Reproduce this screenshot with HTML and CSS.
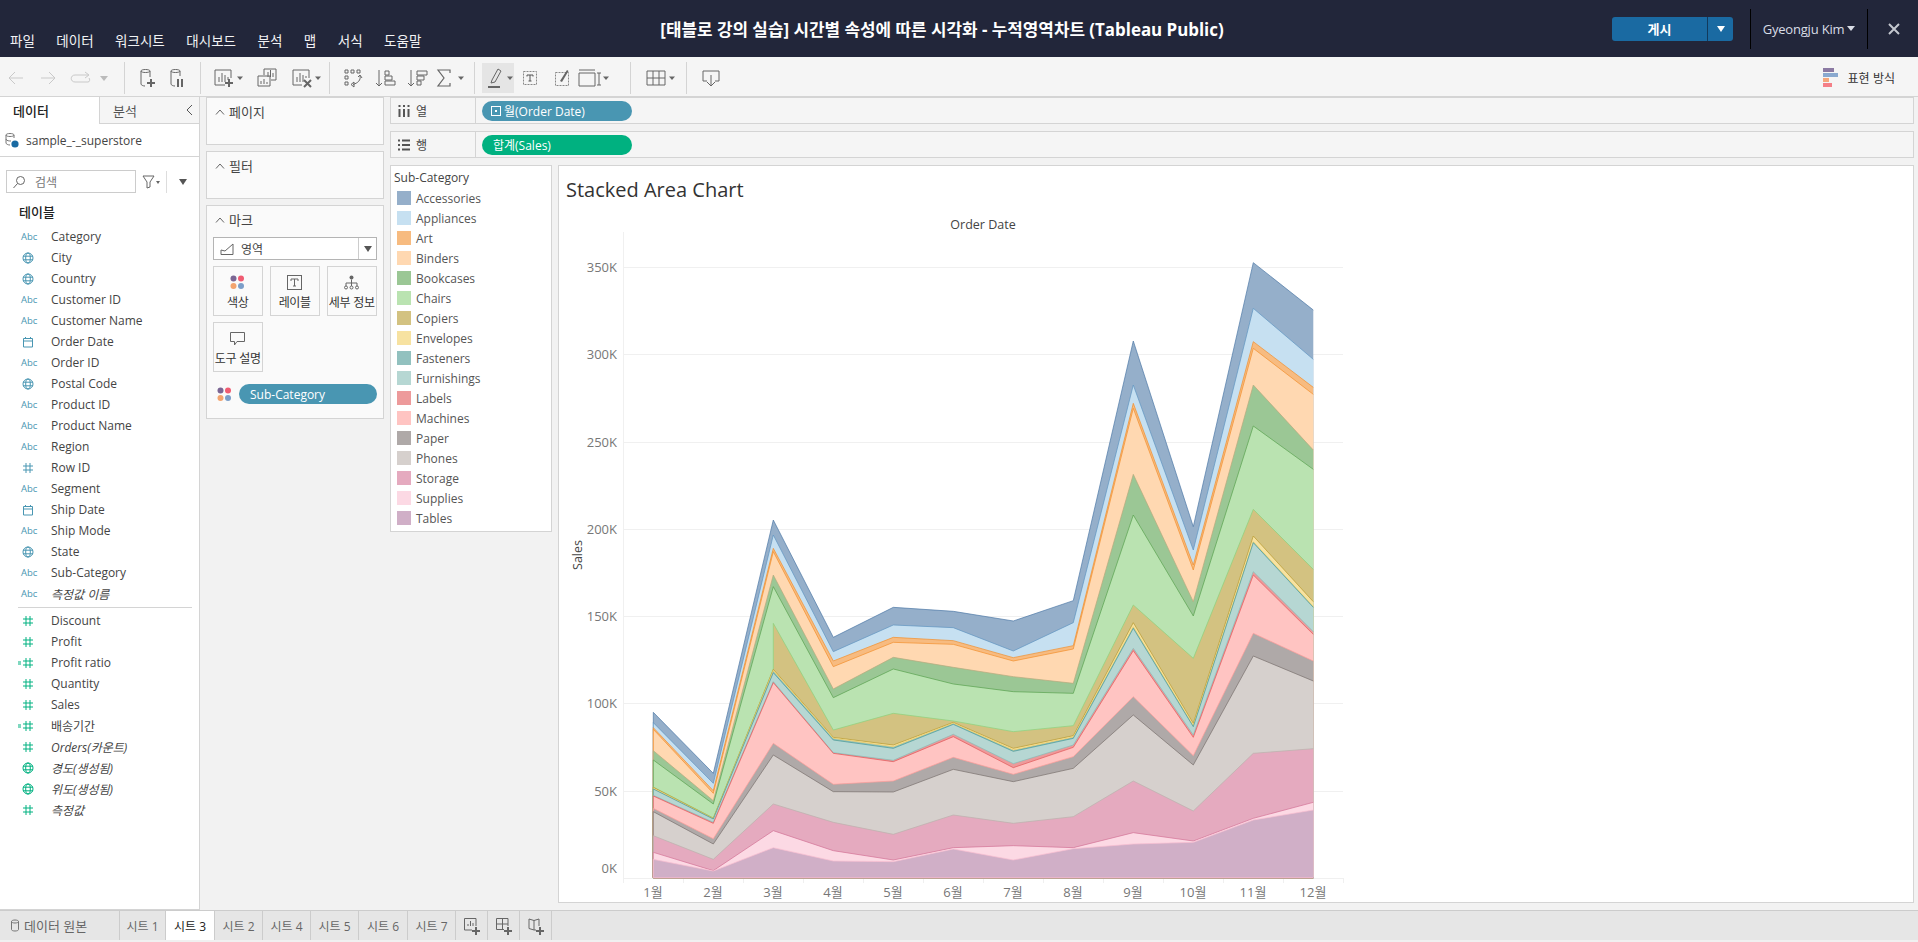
FILE: index.html
```html
<!DOCTYPE html>
<html lang="ko">
<head>
<meta charset="utf-8">
<title>Tableau Public</title>
<link rel="stylesheet" href="styles.css">
</head>
<body>
<svg class="defs" aria-hidden="true">
  <defs>
    <symbol id="i-globe" viewBox="0 0 12 12"><circle cx="6" cy="6" r="5" fill="none" stroke="currentColor"/><ellipse cx="6" cy="6" rx="2.3" ry="5" fill="none" stroke="currentColor"/><path d="M1 4.2H11M1 7.8H11" stroke="currentColor" fill="none"/></symbol>
    <symbol id="i-cal" viewBox="0 0 12 12"><path d="M1.5 2.5H10.5V11H1.5ZM1.5 5H10.5M3.5 1V3M8.5 1V3" fill="none" stroke="currentColor"/></symbol>
    <symbol id="i-hash" viewBox="0 0 12 12"><path d="M4 1V11M8 1V11M1 4H11M1 8H11" fill="none" stroke="currentColor"/></symbol>
    <symbol id="i-calc" viewBox="0 0 16 12"><path d="M8 1V11M12 1V11M5 4H15M5 8H15" fill="none" stroke="currentColor"/><path d="M0 5H3M0 7H3" fill="none" stroke="currentColor"/></symbol>
    <symbol id="i-chev" viewBox="0 0 10 6"><path d="M1 5.5L5 1L9 5.5" fill="none" stroke="#666"/></symbol>
    <symbol id="i-dots" viewBox="0 0 15 15"><circle cx="3.5" cy="3.5" r="3" fill="#7b6694"/><circle cx="11" cy="3.5" r="3" fill="#f05c72"/><circle cx="3.5" cy="11" r="3" fill="#f3a46f"/><circle cx="11" cy="11" r="3" fill="#7b9ec9"/></symbol>
    <symbol id="i-caret" viewBox="0 0 8 24"><path d="M1 10.5H7L4 14Z" fill="#666"/></symbol>
    <symbol id="i-newbars" viewBox="0 0 24 24"><path d="M13 19H3V4H19V12" fill="none" stroke="#666"/><path d="M7 16V11M10 16V7M13 16V9M16 14V11" stroke="#666" fill="none"/><path d="M17 13V21M13 17H21" stroke="#666" stroke-width="2" fill="none"/></symbol>
  </defs>
</svg>

<header class="topbar">
  <nav class="menu">
    <span>파일</span><span>데이터</span><span>워크시트</span><span>대시보드</span><span>분석</span><span>맵</span><span>서식</span><span>도움말</span>
  </nav>
  <h1 class="doc-title">[태블로 강의 실습] 시간별 속성에 따른 시각화 - 누적영역차트 (Tableau Public)</h1>
  <div class="account">
    <div class="publish"><span class="publish-main">게시</span><span class="publish-more"></span></div>
    <div class="user">Gyeongju Kim<span class="user-caret"></span></div>
    <svg class="close" width="12" height="12" viewBox="0 0 12 12"><path d="M1 1L11 11M11 1L1 11" stroke="#c4c7cf" stroke-width="2" fill="none"/></svg>
  </div>
</header>

<div class="toolbar">
  <div class="tb-group g1">
    <svg class="tb w32" viewBox="0 0 32 24"><path d="M23 12H9M15 6L9 12L15 18" fill="none" stroke="#c9c9c9"/></svg>
    <svg class="tb w32" viewBox="0 0 32 24"><path d="M9 12H23M17 6L23 12L17 18" fill="none" stroke="#c9c9c9"/></svg>
    <svg class="tb w32" viewBox="0 0 32 24"><path d="M24 9H11C6 9 6 16 11 16H24C26 16 26 13 25 12M21 6L25 9L21 12" fill="none" stroke="#c9c9c9"/></svg>
    <svg class="tb w16" viewBox="0 0 16 24"><path d="M4 10H12L8 15Z" fill="#bbb"/></svg>
  </div>
  <div class="tb-group g2">
    <svg class="tb w30" viewBox="0 0 30 24"><path d="M9 5C9 3 18 3 18 5V11M9 5V18C9 19 11 20 13 20M9 5C9 7 18 7 18 5" fill="none" stroke="#666"/><path d="M19 13V21M15 17H23" stroke="#666" stroke-width="2" fill="none"/></svg>
    <svg class="tb w30" viewBox="0 0 30 24"><path d="M9 5C9 3 18 3 18 5V10M9 5V18C9 19 11 20 13 20M9 5C9 7 18 7 18 5" fill="none" stroke="#666"/><path d="M16 13V21M20 13V21" stroke="#666" stroke-width="2" fill="none"/></svg>
  </div>
  <div class="tb-group g3">
    <div class="tb-cluster"><svg class="tb w24" viewBox="0 0 24 24"><use href="#i-newbars"/></svg><svg class="tb w8" viewBox="0 0 8 24"><use href="#i-caret"/></svg></div>
    <svg class="tb w24" viewBox="0 0 24 24"><path d="M9 9V3H21V14H16" fill="none" stroke="#666"/><path d="M3 10H15V20H3Z" fill="#f5f5f5" stroke="#666"/><path d="M13 11V6M15.500 11V4M18 11V7M6 18V15M9 18V13M12 18V16" stroke="#666" fill="none"/></svg>
    <div class="tb-cluster"><svg class="tb w24" viewBox="0 0 24 24"><path d="M12 19H3V4H19V12" fill="none" stroke="#666"/><path d="M7 16V11M10 16V7M13 16V9M16 12V10" stroke="#666" fill="none"/><path d="M14 14L21 21M21 14L14 21" stroke="#666" stroke-width="2" fill="none"/></svg><svg class="tb w8" viewBox="0 0 8 24"><use href="#i-caret"/></svg></div>
  </div>
  <div class="tb-group g4">
    <svg class="tb w32" viewBox="0 0 32 24"><path d="M8 4H11V7H8ZM14 4H17V7H14ZM20 4H23V7H20ZM8 10H11V13H8ZM8 16H11V19H8Z" fill="none" stroke="#666"/><path d="M23 10C24 14 21 17 16 18.500M14 18.500L17 16V21ZM21 11L23 9L25 12" fill="none" stroke="#666"/></svg>
    <svg class="tb w32" viewBox="0 0 32 24"><path d="M10 4V20M7 17L10 20L13 17" fill="none" stroke="#666"/><path d="M16 5H20V9H16ZM16 10H23V14H16ZM16 15H26V19H16Z" fill="none" stroke="#666"/></svg>
    <svg class="tb w32" viewBox="0 0 32 24"><path d="M10 4V20M7 17L10 20L13 17" fill="none" stroke="#666"/><path d="M16 5H26V9H16ZM16 10H23V14H16ZM16 15H20V19H16Z" fill="none" stroke="#666"/></svg>
    <div class="tb-cluster"><svg class="tb w24" viewBox="0 0 24 24"><path d="M17 7V4H5L11 12L5 20H17V17" fill="none" stroke="#666" stroke-width="1.200"/></svg><svg class="tb w8" viewBox="0 0 8 24"><use href="#i-caret"/></svg></div>
  </div>
  <div class="tb-group g5">
    <div class="tb-active"><svg class="tb w24" viewBox="0 0 24 24"><path d="M10 14L9 17L13 16L19 5L16 3Z" fill="none" stroke="#666"/><path d="M6 21H18" stroke="#666" stroke-width="2" fill="none"/></svg><svg class="tb w8" viewBox="0 0 8 24"><use href="#i-caret"/></svg></div>
    <svg class="tb w32" viewBox="0 0 32 24"><rect x="9.500" y="5.500" width="13" height="13" fill="none" stroke="#888" stroke-dasharray="2 1"/><path d="M13 9H19V10.500M16 9V15M14.500 15H17.500M13 10.500V9" fill="none" stroke="#555"/></svg>
    <svg class="tb w32" viewBox="0 0 32 24"><rect x="9.500" y="6.500" width="13" height="13" fill="none" stroke="#888" stroke-dasharray="2 1"/><path d="M14 15L21 4L22.500 5L16 16Z" fill="#666"/></svg>
    <div class="tb-cluster"><svg class="tb w24" viewBox="0 0 24 24"><path d="M1 4H17M1 7H17V20H1ZM21 7V19M19 7H23M19 19H23" fill="none" stroke="#666"/></svg><svg class="tb w8" viewBox="0 0 8 24"><use href="#i-caret"/></svg></div>
  </div>
  <div class="tb-group g6">
    <div class="tb-cluster"><svg class="tb w24" viewBox="0 0 24 24"><path d="M3 5H21V19H3ZM3 12H21M9 5V19M15 5V19" fill="none" stroke="#666"/></svg><svg class="tb w8" viewBox="0 0 8 24"><use href="#i-caret"/></svg></div>
  </div>
  <div class="tb-group g7">
    <svg class="tb w24" viewBox="0 0 24 24"><path d="M8 15H4V5H20V15H16" fill="none" stroke="#666"/><path d="M12 9V20M8 16L12 20L16 16" fill="none" stroke="#666"/></svg>
  </div>
  <div class="show-me">
    <svg width="15" height="19" viewBox="0 0 15 19"><rect y="0" width="11" height="4" fill="#8b7aa3"/><rect y="5" width="15" height="4" fill="#8aa9cf"/><rect y="10" width="6" height="4" fill="#f5a77b"/><rect y="15" width="9" height="4" fill="#f47f87"/></svg>
    <span>표현 방식</span>
  </div>
</div>

<main class="workspace">
  <aside class="data-pane">
    <div class="pane-tabs">
      <div class="pane-tab active">데이터</div>
      <div class="pane-tab">분석<svg class="pane-collapse" width="7" height="12" viewBox="0 0 7 12"><path d="M6 1L1 6L6 11" fill="none" stroke="#555"/></svg></div>
    </div>
    <div class="source">
      <svg width="16" height="16" viewBox="0 0 16 16"><path d="M2 3C2 1 10 1 10 3V6M2 3V11C2 12 4 13 6 13M2 3C2 5 10 5 10 3M2 7C2 9 6 9 7 9" fill="none" stroke="#777"/><circle cx="11" cy="12" r="3.6" fill="#1a6aa2"/></svg>
      <span>sample_-_superstore</span>
    </div>
    <div class="search-row">
      <div class="search">
        <svg width="14" height="14" viewBox="0 0 14 14"><circle cx="8.5" cy="5.5" r="4" fill="none" stroke="#666"/><path d="M5.5 8.5L1.5 13" stroke="#666" fill="none"/></svg>
        <span>검색</span>
      </div>
      <svg class="filter" width="18" height="14" viewBox="0 0 18 14"><path d="M1 1H12L8 7V12L5 13V7Z" fill="none" stroke="#666"/><path d="M14 6H18L16 9Z" fill="#666"/></svg>
      <span class="search-sep"></span>
      <span class="search-tri"></span>
    </div>
    <h2 class="tables-head">테이블</h2>
    <ul class="fields">
      <li class="field"><span class="ficon abc">Abc</span>Category</li>
      <li class="field"><span class="ficon"><svg width="12" height="12"><use href="#i-globe"/></svg></span>City</li>
      <li class="field"><span class="ficon"><svg width="12" height="12"><use href="#i-globe"/></svg></span>Country</li>
      <li class="field"><span class="ficon abc">Abc</span>Customer ID</li>
      <li class="field"><span class="ficon abc">Abc</span>Customer Name</li>
      <li class="field"><span class="ficon"><svg width="12" height="12"><use href="#i-cal"/></svg></span>Order Date</li>
      <li class="field"><span class="ficon abc">Abc</span>Order ID</li>
      <li class="field"><span class="ficon"><svg width="12" height="12"><use href="#i-globe"/></svg></span>Postal Code</li>
      <li class="field"><span class="ficon abc">Abc</span>Product ID</li>
      <li class="field"><span class="ficon abc">Abc</span>Product Name</li>
      <li class="field"><span class="ficon abc">Abc</span>Region</li>
      <li class="field"><span class="ficon"><svg width="12" height="12"><use href="#i-hash"/></svg></span>Row ID</li>
      <li class="field"><span class="ficon abc">Abc</span>Segment</li>
      <li class="field"><span class="ficon"><svg width="12" height="12"><use href="#i-cal"/></svg></span>Ship Date</li>
      <li class="field"><span class="ficon abc">Abc</span>Ship Mode</li>
      <li class="field"><span class="ficon"><svg width="12" height="12"><use href="#i-globe"/></svg></span>State</li>
      <li class="field"><span class="ficon abc">Abc</span>Sub-Category</li>
      <li class="field virtual"><span class="ficon abc">Abc</span>측정값 이름</li>
      <li class="field-sep"></li>
      <li class="field"><span class="ficon measure"><svg width="12" height="12"><use href="#i-hash"/></svg></span>Discount</li>
      <li class="field"><span class="ficon measure"><svg width="12" height="12"><use href="#i-hash"/></svg></span>Profit</li>
      <li class="field"><span class="ficon measure calc"><svg width="16" height="12"><use href="#i-calc"/></svg></span>Profit ratio</li>
      <li class="field"><span class="ficon measure"><svg width="12" height="12"><use href="#i-hash"/></svg></span>Quantity</li>
      <li class="field"><span class="ficon measure"><svg width="12" height="12"><use href="#i-hash"/></svg></span>Sales</li>
      <li class="field"><span class="ficon measure calc"><svg width="16" height="12"><use href="#i-calc"/></svg></span>배송기간</li>
      <li class="field virtual"><span class="ficon measure"><svg width="12" height="12"><use href="#i-hash"/></svg></span>Orders(카운트)</li>
      <li class="field virtual"><span class="ficon measure"><svg width="12" height="12"><use href="#i-globe"/></svg></span>경도(생성됨)</li>
      <li class="field virtual"><span class="ficon measure"><svg width="12" height="12"><use href="#i-globe"/></svg></span>위도(생성됨)</li>
      <li class="field virtual"><span class="ficon measure"><svg width="12" height="12"><use href="#i-hash"/></svg></span>측정값</li>
    </ul>
  </aside>

  <section class="cards">
    <div class="card short"><div class="card-head"><svg width="10" height="6"><use href="#i-chev"/></svg>페이지</div></div>
    <div class="card short"><div class="card-head"><svg width="10" height="6"><use href="#i-chev"/></svg>필터</div></div>
    <div class="card marks">
      <div class="card-head"><svg width="10" height="6"><use href="#i-chev"/></svg>마크</div>
      <div class="mark-type">
        <svg width="14" height="12" viewBox="0 0 14 12"><path d="M1 11.5V7L5 8L13 1V11.5Z" fill="none" stroke="#666"/></svg>
        <span class="mark-type-name">영역</span>
        <span class="mark-type-arrow"></span>
      </div>
      <div class="mark-buttons">
        <div class="mark-btn"><svg width="15" height="15"><use href="#i-dots"/></svg><span>색상</span></div>
        <div class="mark-btn"><svg width="15" height="15" viewBox="0 0 15 15"><rect x=".5" y=".5" width="14" height="14" fill="none" stroke="#666"/><path d="M4 4H11V6M7.5 4V11M6 11H9M4 6V4" fill="none" stroke="#666"/></svg><span>레이블</span></div>
        <div class="mark-btn"><svg width="15" height="15" viewBox="0 0 15 15"><circle cx="7.5" cy="2.5" r="2" fill="#666"/><path d="M7.5 4.5V9M2 11V8H13V11M7.5 9V11" fill="none" stroke="#666"/><circle cx="2" cy="12.5" r="1.5" fill="none" stroke="#666"/><circle cx="7.5" cy="12.5" r="1.5" fill="none" stroke="#666"/><circle cx="13" cy="12.5" r="1.5" fill="none" stroke="#666"/></svg><span>세부 정보</span></div>
        <div class="mark-btn"><svg width="15" height="15" viewBox="0 0 15 15"><path d="M.5 1.5H14.5V10.5H7L4.5 14V10.5H.5Z" fill="none" stroke="#666"/></svg><span>도구 설명</span></div>
      </div>
      <div class="mark-field">
        <svg width="15" height="15"><use href="#i-dots"/></svg>
        <span class="pill dim mark-pill">Sub-Category</span>
      </div>
    </div>
  </section>

  <section class="view">
    <div class="shelf">
      <div class="shelf-label"><svg width="12" height="12" viewBox="0 0 12 12"><path d="M1.5 4V12M6 4V12M10.5 4V12" stroke="#555" stroke-width="2" fill="none"/><path d="M1.5 0V2M6 0V2M10.5 0V2" stroke="#555" stroke-width="2" fill="none"/></svg>열</div>
      <span class="pill dim shelf-pill"><svg class="pill-icon" width="10" height="10" viewBox="0 0 10 10"><rect x=".5" y=".5" width="9" height="9" fill="none" stroke="#fff"/><rect x="4" y="4" width="2" height="2" fill="#fff"/></svg>월(Order Date)</span>
    </div>
    <div class="shelf">
      <div class="shelf-label"><svg width="12" height="12" viewBox="0 0 12 12"><path d="M4 1.5H12M4 6H12M4 10.5H12M0 1.5H2M0 6H2M0 10.5H2" stroke="#555" stroke-width="2" fill="none"/></svg>행</div>
      <span class="pill meas shelf-pill">합계(Sales)</span>
    </div>
    <div class="stage">
      <div class="legend">
        <div class="legend-title">Sub-Category</div>
        <div class="legend-row"><i class="swatch c1"></i>Accessories</div>
        <div class="legend-row"><i class="swatch c2"></i>Appliances</div>
        <div class="legend-row"><i class="swatch c3"></i>Art</div>
        <div class="legend-row"><i class="swatch c4"></i>Binders</div>
        <div class="legend-row"><i class="swatch c5"></i>Bookcases</div>
        <div class="legend-row"><i class="swatch c6"></i>Chairs</div>
        <div class="legend-row"><i class="swatch c7"></i>Copiers</div>
        <div class="legend-row"><i class="swatch c8"></i>Envelopes</div>
        <div class="legend-row"><i class="swatch c9"></i>Fasteners</div>
        <div class="legend-row"><i class="swatch c10"></i>Furnishings</div>
        <div class="legend-row"><i class="swatch c11"></i>Labels</div>
        <div class="legend-row"><i class="swatch c12"></i>Machines</div>
        <div class="legend-row"><i class="swatch c13"></i>Paper</div>
        <div class="legend-row"><i class="swatch c14"></i>Phones</div>
        <div class="legend-row"><i class="swatch c15"></i>Storage</div>
        <div class="legend-row"><i class="swatch c16"></i>Supplies</div>
        <div class="legend-row"><i class="swatch c17"></i>Tables</div>
      </div>
      <div class="viz">
        <div class="viz-title">Stacked Area Chart</div>
        <svg class="chart" width="800" height="693" viewBox="560 210 800 693">
          <text class="axis-title" x="983" y="229" text-anchor="middle">Order Date</text>
          <text class="axis-title" transform="rotate(-90 582 555)" x="582" y="555" text-anchor="middle">Sales</text>
          <g class="grid">
            <path d="M623 267.5H1343M623 354.5H1343M623 442.5H1343M623 529.5H1343M623 616.5H1343M623 703.5H1343M623 791.5H1343M623 878.5H1343"/>
            <path d="M623.5 232V883M683.5 878V883M743.5 878V883M803.5 878V883M863.5 878V883M923.5 878V883M983.5 878V883M1043.5 878V883M1103.5 878V883M1163.5 878V883M1223.5 878V883M1283.5 878V883M1343.5 878V883"/>
          </g>
          <g class="axis-y" text-anchor="end">
            <text x="617" y="272">350K</text><text x="617" y="359">300K</text><text x="617" y="447">250K</text><text x="617" y="534">200K</text><text x="617" y="621">150K</text><text x="617" y="708">100K</text><text x="617" y="796">50K</text><text x="617" y="873">0K</text>
          </g>
          <g class="axis-x" text-anchor="middle">
            <text x="653" y="897">1월</text><text x="713" y="897">2월</text><text x="773" y="897">3월</text><text x="833" y="897">4월</text><text x="893" y="897">5월</text><text x="953" y="897">6월</text><text x="1013" y="897">7월</text><text x="1073" y="897">8월</text><text x="1133" y="897">9월</text><text x="1193" y="897">10월</text><text x="1253" y="897">11월</text><text x="1313" y="897">12월</text>
          </g>
          <g transform="translate(653.3 580) scale(.33333)">
            <polyline class="area a1" points="1980,893 0,893 0,397 180,580 360,-180 540,172 720,82 900,94 1080,123 1260,62 1440,-717 1620,-160 1800,-952 1980,-810"/>
            <polyline class="area a2" points="1980,893 0,893 0,428 180,610 360,-135 540,215 720,135 900,143 1080,213 1260,128 1440,-585 1620,-90 1800,-815 1980,-662"/>
            <polyline class="area a3" points="1980,893 0,893 0,443 180,632 360,-95 540,243 720,172 900,182 1080,233 1260,197 1440,-530 1620,-45 1800,-715 1980,-578"/>
            <polyline class="area a4" points="1980,893 0,893 0,448 180,640 360,-85 540,260 720,187 900,193 1080,243 1260,207 1440,-515 1620,-30 1800,-695 1980,-557"/>
            <polyline class="area a5" points="1980,893 0,893 0,512 180,662 360,-15 540,327 720,232 900,262 1080,290 1260,310 1440,-317 1620,65 1800,-585 1980,-390"/>
            <polyline class="area a6" points="1980,893 0,893 0,540 180,672 360,20 540,353 720,267 900,312 1080,335 1260,340 1440,-195 1620,108 1800,-462 1980,-332"/>
            <polyline class="area a7" points="1980,893 0,893 0,621 180,714 360,268 360,130 540,450 720,400 900,423 1080,455 1260,437 1440,75 1620,235 1800,-212 1980,-32"/>
            <polyline class="area a8" points="1980,893 0,893 0,622 180,715 360,268 540,472 720,495 900,427 1080,505 1260,467 1440,128 1620,430 1800,-132 1980,65"/>
            <polyline class="area a9" points="1980,893 0,893 0,626 180,716 360,272 540,475 720,500 900,430 1080,510 1260,471 1440,140 1620,437 1800,-115 1980,80"/>
            <polyline class="area a10" points="1980,893 0,893 0,627 180,717 360,278 540,480 720,505 900,433 1080,514 1260,475 1440,145 1620,440 1800,-112 1980,82"/>
            <polyline class="area a11" points="1980,893 0,893 0,646 180,727 360,305 540,518 720,541 900,463 1080,551 1260,495 1440,205 1620,465 1800,-25 1980,155"/>
            <polyline class="area a12" points="1980,893 0,893 0,648 180,730 360,308 540,520 720,545 900,470 1080,563 1260,502 1440,212 1620,472 1800,-15 1980,163"/>
            <polyline class="area a13" points="1980,893 0,893 0,685 180,776 360,490 540,613 720,603 900,532 1080,583 1260,530 1440,350 1620,527 1800,160 1980,243"/>
            <polyline class="area a14" points="1980,893 0,893 0,695 180,792 360,525 540,635 720,636 900,568 1080,605 1260,565 1440,405 1620,555 1800,228 1980,303"/>
            <polyline class="area a15" points="1980,893 0,893 0,767 180,838 360,672 540,727 720,763 900,705 1080,730 1260,710 1440,603 1620,693 1800,520 1980,506"/>
            <polyline class="area a16" points="1980,893 0,893 0,817 180,872 360,752 540,812 720,840 900,803 1080,797 1260,803 1440,758 1620,783 1800,715 1980,667"/>
            <polyline class="area a17" points="1980,893 0,893 0,838 180,873 360,803 540,843 720,845 900,807 1080,840 1260,806 1440,792 1620,787 1800,720 1980,690"/>
          </g>
        </svg>
      </div>
    </div>
  </section>
</main>

<footer class="tabbar">
  <div class="tab source-tab"><svg width="8" height="13" viewBox="0 0 8 13"><path d="M.5 2.5C.5 0.5 7.5 0.5 7.5 2.5V10.5C7.5 12.5 .5 12.5 .5 10.5ZM.5 2.5C.5 4.5 7.5 4.5 7.5 2.5" fill="none" stroke="#777"/></svg>데이터 원본</div>
  <div class="tab t46">시트 1</div>
  <div class="tab t49 current">시트 3</div>
  <div class="tab t48">시트 2</div>
  <div class="tab t48">시트 4</div>
  <div class="tab t48">시트 5</div>
  <div class="tab t49">시트 6</div>
  <div class="tab t48">시트 7</div>
  <div class="tab t32"><svg width="18" height="18" viewBox="0 0 18 18"><path d="M9 13H1.500V1.500H13V9" fill="none" stroke="#666"/><path d="M5 9V7M7.500 9V4M10 9V6" stroke="#666" fill="none"/><path d="M13 10V18M9 14H17" stroke="#666" stroke-width="2" fill="none"/></svg></div>
  <div class="tab t32"><svg width="18" height="18" viewBox="0 0 18 18"><path d="M9 12.500H1.500V1.500H13V9M7.500 1.500V12.500M1.500 7H13" fill="none" stroke="#666"/><path d="M13 10V18M9 14H17" stroke="#666" stroke-width="2" fill="none"/></svg></div>
  <div class="tab t32"><svg width="18" height="18" viewBox="0 0 18 18"><path d="M2 2L7 3.500V13L2 11.500ZM7 3.500L12 2V9M7 13H9" fill="none" stroke="#666"/><path d="M13 10V18M9 14H17" stroke="#666" stroke-width="2" fill="none"/></svg></div>
</footer>
</body>
</html>
```

FILE: styles.css
```css
* { box-sizing: border-box; }
html, body { margin: 0; height: 100%; }
body {
  width: 1918px;
  height: 942px;
  overflow: hidden;
  display: flex;
  flex-direction: column;
  font-family: "Open Sans", "Noto Sans CJK KR", sans-serif;
  font-size: 12px;
  color: #444;
  background: #f2f2f2;
}
.defs { position: absolute; width: 0; height: 0; }
ul { list-style: none; margin: 0; padding: 0; }
h1, h2 { margin: 0; }

/* top bar */
.topbar {
  flex: 0 0 57px;
  display: grid;
  grid-template-columns: 1fr auto 1fr;
  align-items: center;
  background: #22263a;
  color: #fff;
  padding-right: 18px;
}
.menu {
  display: flex;
  gap: 21.500px;
  padding: 23px 0 0 10px;
  font-family: "Noto Sans CJK KR", sans-serif;
  font-size: 13.500px;
  color: #f2f3f5;
  white-space: nowrap;
}
.doc-title {
  margin-right: 16px;
  font-family: "Open Sans", "Noto Sans CJK KR", sans-serif;
  font-size: 16.900px;
  font-weight: 700;
  white-space: nowrap;
  color: #fff;
}
.account { display: flex; align-items: center; justify-content: flex-end; }
.publish {
  display: flex;
  width: 121px;
  height: 24px;
  background: #1a6aa2;
  border-radius: 3px;
}
.publish-main {
  flex: 0 0 96px;
  text-align: center;
  line-height: 24px;
  font-family: "Noto Sans CJK KR", sans-serif;
  font-weight: 700;
  font-size: 13px;
  border-right: 1px solid #123a5c;
}
.publish-more { flex: 1; position: relative; }
.publish-more::after {
  content: "";
  position: absolute;
  left: 9px;
  top: 9px;
  border: 4px solid transparent;
  border-top: 6px solid #fff;
  border-bottom: 0;
}
.user {
  margin-left: 17px;
  width: 118px;
  height: 40px;
  border-left: 1px solid #000;
  border-right: 1px solid #000;
  display: flex;
  align-items: center;
  justify-content: center;
  color: #d9dde6;
  font-size: 13px;
  letter-spacing: -0.2px;
}
.user-caret {
  margin-left: 3px;
  border: 4px solid transparent;
  border-top: 5px solid #d9dde6;
  border-bottom: 0;
}
.close { margin-left: 20px; }

/* toolbar */
.toolbar {
  flex: 0 0 40px;
  display: flex;
  align-items: center;
  background: #f5f5f5;
  border-bottom: 1px solid #d4d4d4;
  padding-top: 2px;
}
.tb-group {
  display: flex;
  align-items: center;
  height: 32px;
  border-right: 1px solid #d4d4d4;
}
.g1 { width: 125px; }
.g2 { width: 76px; padding-left: 7px; }
.g3 { width: 129px; padding-left: 11px; gap: 11px; }
.g4 { width: 145px; padding-left: 7px; }
.g5 { width: 156px; padding-left: 7px; }
.g6 { width: 56px; padding-left: 2px; justify-content: center; }
.g7 { width: 48px; border-right: 0; justify-content: center; }
.tb { display: block; height: 24px; flex: none; }
.w8 { width: 8px; }
.w16 { width: 16px; }
.w24 { width: 24px; }
.w30 { width: 30px; }
.w32 { width: 32px; }
.tb-cluster { display: flex; align-items: center; }
.tb-active {
  display: flex;
  align-items: center;
  justify-content: center;
  width: 32px;
  height: 30px;
  background: #e5e5e5;
}
.show-me {
  margin-left: auto;
  padding-right: 23px;
  display: flex;
  align-items: center;
  gap: 9px;
  font-family: "Noto Sans CJK KR", sans-serif;
  font-size: 12px;
  color: #333;
}

/* workspace */
.workspace { flex: 1; display: flex; min-height: 0; }
.data-pane {
  flex: 0 0 200px;
  background: #fff;
  border-right: 1px solid #d4d4d4;
  border-bottom: 1px solid #d4d4d4;
}
.pane-tabs { display: flex; height: 27px; }
.pane-tab {
  flex: 1;
  display: flex;
  align-items: center;
  padding-left: 13px;
  position: relative;
  font-size: 13px;
  color: #555;
  background: #f5f5f5;
  border-bottom: 1px solid #d4d4d4;
}
.pane-tab.active {
  background: #fff;
  color: #222;
  font-weight: 500;
  border-bottom: 0;
  border-right: 1px solid #d4d4d4;
}
.pane-collapse { position: absolute; right: 6px; top: 7px; }
.source {
  height: 33px;
  display: flex;
  align-items: center;
  gap: 6px;
  padding-left: 4px;
  border-bottom: 1px solid #d4d4d4;
  color: #444;
}
.search-row {
  display: flex;
  align-items: center;
  height: 23px;
  margin-top: 13px;
  padding-left: 6px;
}
.search {
  width: 130px;
  height: 23px;
  display: flex;
  align-items: center;
  gap: 9px;
  padding-left: 5px;
  border: 1px solid #ccc;
  color: #777;
}
.filter { margin-left: 6px; }
.search-sep { width: 1px; height: 22px; margin-left: 6px; background: #ddd; }
.search-tri {
  margin-left: 12px;
  border: 4px solid transparent;
  border-top: 6px solid #555;
  border-bottom: 0;
}
.tables-head {
  margin: 9px 0 3px 19px;
  height: 21px;
  line-height: 21px;
  font-size: 13px;
  font-weight: 500;
  color: #222;
}
.field {
  display: flex;
  align-items: center;
  height: 21px;
  padding-left: 18px;
  color: #444;
  white-space: nowrap;
}
.field-sep {
  height: 1px;
  margin: 3px 7px 2px 18px;
  background: #d4d4d4;
}
.virtual { font-style: italic; }
.ficon {
  flex: 0 0 33px;
  display: flex;
  align-items: center;
  padding-left: 4px;
  color: #4996b2;
  font-style: normal;
}
.ficon.abc { padding-left: 3px; font-size: 9.500px; }
.ficon.measure { color: #00b180; }
.ficon.calc { padding-left: 0; }

/* cards */
.cards {
  flex: 0 0 190px;
  padding-left: 6px;
  display: flex;
  flex-direction: column;
  gap: 6px;
}
.card {
  width: 178px;
  background: #fafafa;
  border: 1px solid #d4d4d4;
}
.card.short { height: 48px; }
.card.marks { height: 214px; padding: 0 6px; }
.card-head {
  height: 27px;
  display: flex;
  align-items: center;
  gap: 4px;
  padding-left: 8px;
  color: #444;
  font-size: 13px;
}
.marks .card-head { padding-left: 2px; margin-bottom: 4px; }
.mark-type {
  display: flex;
  align-items: center;
  height: 23px;
  border: 1px solid #b4b4b4;
  background: #fff;
  padding-left: 6px;
}
.mark-type-name { margin-left: 7px; flex: 1; color: #444; }
.mark-type-arrow {
  flex: 0 0 18px;
  height: 100%;
  border-left: 1px solid #ccc;
  position: relative;
}
.mark-type-arrow::after {
  content: "";
  position: absolute;
  left: 5px;
  top: 8px;
  border: 4px solid transparent;
  border-top: 6px solid #555;
  border-bottom: 0;
}
.mark-buttons {
  display: flex;
  flex-wrap: wrap;
  gap: 6px 7.500px;
  margin-top: 6px;
}
.mark-btn {
  width: 49.500px;
  height: 50px;
  background: #fafafa;
  border: 1px solid #d4d4d4;
  display: flex;
  flex-direction: column;
  align-items: center;
  padding-top: 8px;
  gap: 3px;
  color: #333;
  white-space: nowrap;
  font-size: 12px;
  letter-spacing: -0.3px;
}
.mark-field {
  display: flex;
  align-items: center;
  gap: 7px;
  margin-top: 12px;
  padding-left: 4px;
}
.pill {
  display: flex;
  align-items: center;
  height: 20px;
  border-radius: 10px;
  color: #fff;
  font-size: 12px;
}
.pill.dim { background: #4996b2; }
.pill.meas { background: #00b180; }
.mark-pill { width: 138px; padding-left: 11px; }
.shelf-pill { width: 150px; margin-left: 6px; padding-left: 8px; }
.meas.shelf-pill { padding-left: 11px; }
.pill-icon { margin-right: 3px; margin-left: 1px; }

/* right side */
.view {
  flex: 1;
  min-width: 0;
  padding: 0 4px 7px 0;
  display: flex;
  flex-direction: column;
}
.shelf {
  flex: 0 0 27px;
  margin-bottom: 7px;
  display: flex;
  align-items: center;
  background: #f5f5f5;
  border: 1px solid #d4d4d4;
}
.shelf-label {
  flex: 0 0 85px;
  height: 100%;
  display: flex;
  align-items: center;
  gap: 6px;
  padding-left: 7px;
  border-right: 1px solid #d4d4d4;
  color: #444;
}
.stage { flex: 1; display: flex; gap: 6px; min-height: 0; }
.legend {
  flex: 0 0 162px;
  height: 367px;
  background: #fff;
  border: 1px solid #d4d4d4;
  padding: 2px 0 0 3px;
}
.legend-title { height: 20px; line-height: 19px; color: #444; }
.legend-row {
  display: flex;
  align-items: center;
  height: 20px;
  padding-left: 3px;
  color: #555;
}
.swatch { width: 14px; height: 14px; margin-right: 5px; flex: none; }
.c1 { background: #95afca; }
.c2 { background: #c6e0f1; }
.c3 { background: #f7bb80; }
.c4 { background: #ffd8b1; }
.c5 { background: #9bc795; }
.c6 { background: #bae3b1; }
.c7 { background: #d3c281; }
.c8 { background: #f7e2a1; }
.c9 { background: #92c1bf; }
.c10 { background: #b6d7d3; }
.c11 { background: #ed9a9b; }
.c12 { background: #ffc4c2; }
.c13 { background: #afa9a8; }
.c14 { background: #d6d0cd; }
.c15 { background: #e5aabf; }
.c16 { background: #fcd9e4; }
.c17 { background: #d0afc7; }

.viz {
  flex: 1;
  min-width: 0;
  background: #fff;
  border: 1px solid #d4d4d4;
  position: relative;
}
.viz-title {
  position: absolute;
  left: 7px;
  top: 10px;
  font-size: 20px;
  line-height: 28px;
  color: #333;
  white-space: nowrap;
  z-index: 1;
}
.chart { position: absolute; left: 1px; top: 44px; display: block; }
.chart text { font-family: "Open Sans", "Noto Sans CJK KR", sans-serif; font-size: 13px; }
.chart .axis-title { fill: #444; font-size: 12.500px; }
.axis-y text, .axis-x text { fill: #777; }
.grid path { fill: none; stroke: #f0f0f0; stroke-width: 1; shape-rendering: crispEdges; }
.area { stroke-width: 1; vector-effect: non-scaling-stroke; stroke-opacity: .7; stroke-linejoin: miter; }
.a1 { fill: #95afca; stroke: #4e79a7; }
.a2 { fill: #c6e0f1; stroke: #5f94c0; }
.a3 { fill: #f7bb80; stroke: #f28e2b; }
.a4 { fill: #ffd8b1; stroke: #f28e2b; }
.a5 { fill: #9bc795; stroke: #b7a97e; }
.a6 { fill: #bae3b1; stroke: #59a14f; }
.a7 { fill: #d3c281; stroke: #8cd17d; }
.a8 { fill: #f7e2a1; stroke: #b6992d; }
.a9 { fill: #92c1bf; stroke: #f1ce63; }
.a10 { fill: #b6d7d3; stroke: #499894; }
.a11 { fill: #ed9a9b; stroke: #86bcb6; }
.a12 { fill: #ffc4c2; stroke: #e15759; }
.a13 { fill: #afa9a8; stroke: #ff9d9a; }
.a14 { fill: #d6d0cd; stroke: #79706e; }
.a15 { fill: #e5aabf; stroke: #bab0ac; }
.a16 { fill: #fcd9e4; stroke: #d37295; }
.a17 { fill: #d0afc7; stroke: #fabfd2; }

/* bottom tabs */
.tabbar {
  flex: 0 0 32px;
  display: flex;
  background: #e6e6e6;
  border-top: 1px solid #ccc;
  border-bottom: 2px solid #f0f0f0;
}
.tab {
  display: flex;
  align-items: center;
  justify-content: center;
  border-right: 1px solid #ccc;
  color: #666;
  font-size: 12px;
}
.source-tab { flex: 0 0 120px; justify-content: flex-start; padding-left: 11px; gap: 5px; font-size: 13px; }
.t46 { flex: 0 0 46px; }
.t48 { flex: 0 0 48px; }
.t49 { flex: 0 0 49px; }
.t32 { flex: 0 0 32px; }
.tab.current { background: #fff; color: #222; }
```
